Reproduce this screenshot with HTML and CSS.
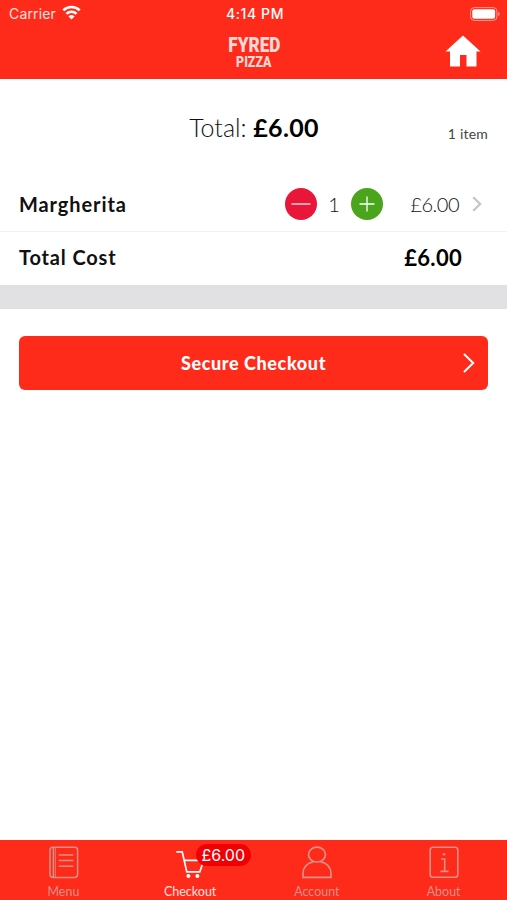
FILE: index.html
```html
<!DOCTYPE html>
<html lang="en">
<head>
    <meta charset="UTF-8">
    <meta name="viewport" content="width=device-width, initial-scale=1.0">
    <title>Fyred Pizza - Checkout</title>
    <link rel="stylesheet" href="styles.css">
</head>
<body>
    <header class="header">
        <div class="status-bar">
            <div class="status-left">
                <span class="carrier">Carrier</span>
                <svg class="wifi" width="19" height="15" viewBox="0 0 20 15" fill="none" stroke="#fff" stroke-width="2.8">
                    <path d="M1.4 5.3a12.2 12.2 0 0 1 17.2 0"/>
                    <path d="M4.7 8.9a7.5 7.5 0 0 1 10.6 0"/>
                    <path d="M10 14.8l-3.2-3.2a4.6 4.6 0 0 1 6.4 0z" fill="#fff" stroke="none"/>
                </svg>
            </div>
            <span class="time">4:14 PM</span>
            <svg class="battery" width="31" height="14" viewBox="0 0 31 14">
                <rect x="0.6" y="0.6" width="26.3" height="12.8" rx="3.6" fill="none" stroke="#ff9a90" stroke-width="1"/>
                <rect x="2.3" y="2.3" width="22.8" height="9.4" rx="2" fill="#fff"/>
                <path d="M28.2 4.8a2.4 2.4 0 0 1 0 4.4z" fill="#ff9a90"/>
            </svg>
        </div>
        <div class="nav-bar">
            <div class="logo">
                <span class="logo-top">FYRED</span>
                <span class="logo-bottom">PIZZA</span>
            </div>
            <svg class="home" width="36" height="32" viewBox="0 0 36 32" fill="#fff">
                <path d="M18 0.5L35.5 16.5H31.5V31.5H21.5V20H15V31.5H5V16.5H0.5z"/>
            </svg>
        </div>
    </header>

    <main class="basket">
        <div class="summary">
            <div class="summary-total">Total: <strong>£6.00</strong></div>
            <span class="summary-count">1 item</span>
        </div>

        <div class="row item-row">
            <span class="item-name">Margherita</span>
            <div class="stepper">
                <svg width="32" height="32" viewBox="0 0 32 32">
                    <circle cx="16" cy="16" r="16" fill="#e91639"/>
                    <path d="M6.5 16h19" stroke="#fff" stroke-width="1.2"/>
                </svg>
                <span class="quantity">1</span>
                <svg width="32" height="32" viewBox="0 0 32 32">
                    <circle cx="16" cy="16" r="16" fill="#4aa51c"/>
                    <path d="M8.5 16h15M16 8.5v15" stroke="#fff" stroke-width="1.3"/>
                </svg>
            </div>
            <span class="item-price">£6.00</span>
            <svg class="row-arrow" width="10" height="16" viewBox="0 0 10 16" fill="none" stroke="#c4c4c8" stroke-width="2.2">
                <path d="M1.2 1.2L8.2 8L1.2 14.8"/>
            </svg>
        </div>

        <div class="row cost-row">
            <span class="cost-label">Total Cost</span>
            <span class="cost-price">£6.00</span>
        </div>

        <div class="divider"></div>

        <button class="checkout-button">
            <span class="checkout-label">Secure Checkout</span>
            <svg class="checkout-arrow" width="12" height="20" viewBox="0 0 12 20" fill="none" stroke="#fff" stroke-width="2" stroke-linecap="round">
                <path d="M1.5 1.5L10.2 10L1.5 18.5"/>
            </svg>
        </button>
    </main>

    <nav class="tab-bar">
        <div class="tab">
            <svg width="32" height="34" viewBox="0 0 32 34" fill="none" stroke="currentColor" stroke-width="1.5">
                <rect x="3" y="1.2" width="27.6" height="30.2" rx="2.8"/>
                <path d="M6.4 1.5v29.6M11.8 9h14.5M11.8 14.5h14.5M11.8 20.2h14.5"/>
                <path d="M8.4 1.5v29.6" stroke-width="0.8"/>
            </svg>
            <span class="tab-label">Menu</span>
        </div>
        <div class="tab active">
            <svg width="32" height="34" viewBox="0 0 32 34" fill="none" stroke="currentColor" stroke-width="1.7">
                <path d="M2.3 5.9h5.9l4.6 20h13l5.2-15.5M9.8 14.3h20"/>
                <circle cx="14.4" cy="30" r="2" fill="currentColor" stroke="none"/>
                <circle cx="23.4" cy="30" r="2" fill="currentColor" stroke="none"/>
            </svg>
            <span class="badge">£6.00</span>
            <span class="tab-label">Checkout</span>
        </div>
        <div class="tab">
            <svg width="32" height="34" viewBox="0 0 32 34" fill="none" stroke="currentColor" stroke-width="1.7">
                <ellipse cx="16" cy="8.6" rx="8.5" ry="7.4"/>
                <path d="M12.5 15.6C6 17 2 21.6 2 27.6v3.7h28v-3.7c0-6-4-10.6-10.5-12"/>
            </svg>
            <span class="tab-label">Account</span>
        </div>
        <div class="tab">
            <svg width="32" height="34" viewBox="0 0 32 34" fill="none" stroke="currentColor" stroke-width="1.6">
                <rect x="2.2" y="1.3" width="27.6" height="30" rx="2.8"/>
                <path d="M13 13h3.7v12.4M12.5 25.4h8"/>
                <circle cx="16" cy="8.3" r="1.3" fill="currentColor" stroke="none"/>
            </svg>
            <span class="tab-label">About</span>
        </div>
    </nav>
</body>
</html>
```
FILE: styles.css
```css
* {
    box-sizing: border-box;
}
body {
    font-family: Lato, "Open Sans", sans-serif;
    background-color: #fff;
    color: #111;
    margin: 0;
    height: 100vh;
    display: flex;
    flex-direction: column;
    overflow: hidden;
}
svg {
    display: block;
    flex-shrink: 0;
}
.header {
    background-color: #ff2b1a;
    height: 79px;
    color: #fff;
}
.status-bar {
    display: grid;
    grid-template-columns: 1fr auto 1fr;
    align-items: center;
    height: 27px;
    padding: 0 6px 0 9px;
    font-family: Inter, sans-serif;
    font-size: 14px;
}
.status-left {
    display: flex;
    align-items: center;
    gap: 6px;
}
.carrier {
    color: #ffe3e0;
    letter-spacing: 0.15px;
}
.wifi {
    margin-top: -2px;
}
.time {
    font-weight: 500;
    font-size: 14px;
    letter-spacing: 0.6px;
}
.battery {
    justify-self: end;
}
.nav-bar {
    display: grid;
    grid-template-columns: 1fr auto 1fr;
    align-items: center;
    height: 50px;
    padding: 0 26px;
}
.logo {
    grid-column: 2;
    display: flex;
    flex-direction: column;
    align-items: center;
    padding: 2px 0 0 1px;
    font-family: Roboto, sans-serif;
    font-weight: 900;
    color: #ffd9d6;
}
.logo-top {
    font-size: 20px;
    line-height: 16px;
    transform: scaleX(0.86);
}
.logo-bottom {
    margin-top: 2px;
    font-size: 14.5px;
    line-height: 15px;
    transform: scaleX(0.85);
}
.home {
    justify-self: end;
    margin-top: -2px;
}
.basket {
    flex: 1;
}
.summary {
    position: relative;
    height: 97px;
    text-align: center;
}
.summary-total {
    padding-left: 1px;
    font-size: 25px;
    font-weight: 300;
    line-height: 96px;
}
.summary-total strong {
    font-weight: 700;
    letter-spacing: 0.3px;
    color: #000;
}
.summary-count {
    position: absolute;
    right: 19px;
    top: 46px;
    font-size: 14px;
    letter-spacing: 0.2px;
    color: #444;
}
.row {
    display: flex;
    align-items: center;
    padding: 0 19px;
    font-size: 20px;
}
.item-row {
    height: 56px;
    border-bottom: 1px solid #f0f0f0;
}
.item-name {
    flex: 1;
    font-weight: 700;
    letter-spacing: 0.9px;
}
.stepper {
    display: flex;
    align-items: center;
}
.quantity {
    width: 34px;
    text-align: center;
    font-weight: 300;
}
.item-price {
    width: 76px;
    text-align: right;
    font-weight: 300;
    letter-spacing: -0.5px;
}
.row-arrow {
    margin: 0 6px 0 13px;
}
.cost-row {
    height: 53px;
    padding-bottom: 3px;
    font-weight: 700;
}
.cost-label {
    flex: 1;
    letter-spacing: 0.85px;
}
.cost-price {
    font-size: 22px;
    letter-spacing: 0.3px;
    margin-right: 26px;
    color: #000;
}
.divider {
    height: 24px;
    background-color: #e1e1e3;
}
.checkout-button {
    display: grid;
    grid-template-columns: 1fr auto 1fr;
    align-items: center;
    width: calc(100% - 38px);
    height: 54px;
    margin: 27px 19px 0;
    padding: 0 13px;
    border: none;
    border-radius: 6px;
    background-color: #ff2b1a;
    color: #fff;
    font-family: inherit;
    font-size: 18px;
    font-weight: 900;
    letter-spacing: 0.6px;
}
.checkout-label {
    grid-column: 2;
}
.checkout-arrow {
    justify-self: end;
}
.tab-bar {
    display: flex;
    height: 60px;
    background-color: #ff2b1a;
}
.tab {
    position: relative;
    flex: 1;
    display: flex;
    flex-direction: column;
    align-items: center;
    padding-top: 6px;
    color: #d99189;
}
.tab.active {
    color: #fff;
}
.tab-label {
    margin-top: 3px;
    font-size: 12.5px;
    line-height: 17px;
}
.active .tab-label {
    color: #ffe3e0;
}
.badge {
    position: absolute;
    left: 69px;
    top: 4px;
    width: 55px;
    height: 22px;
    border-radius: 11px;
    background-color: #f00005;
    font-family: Inter, sans-serif;
    font-size: 16px;
    line-height: 22px;
    text-align: center;
}
```
